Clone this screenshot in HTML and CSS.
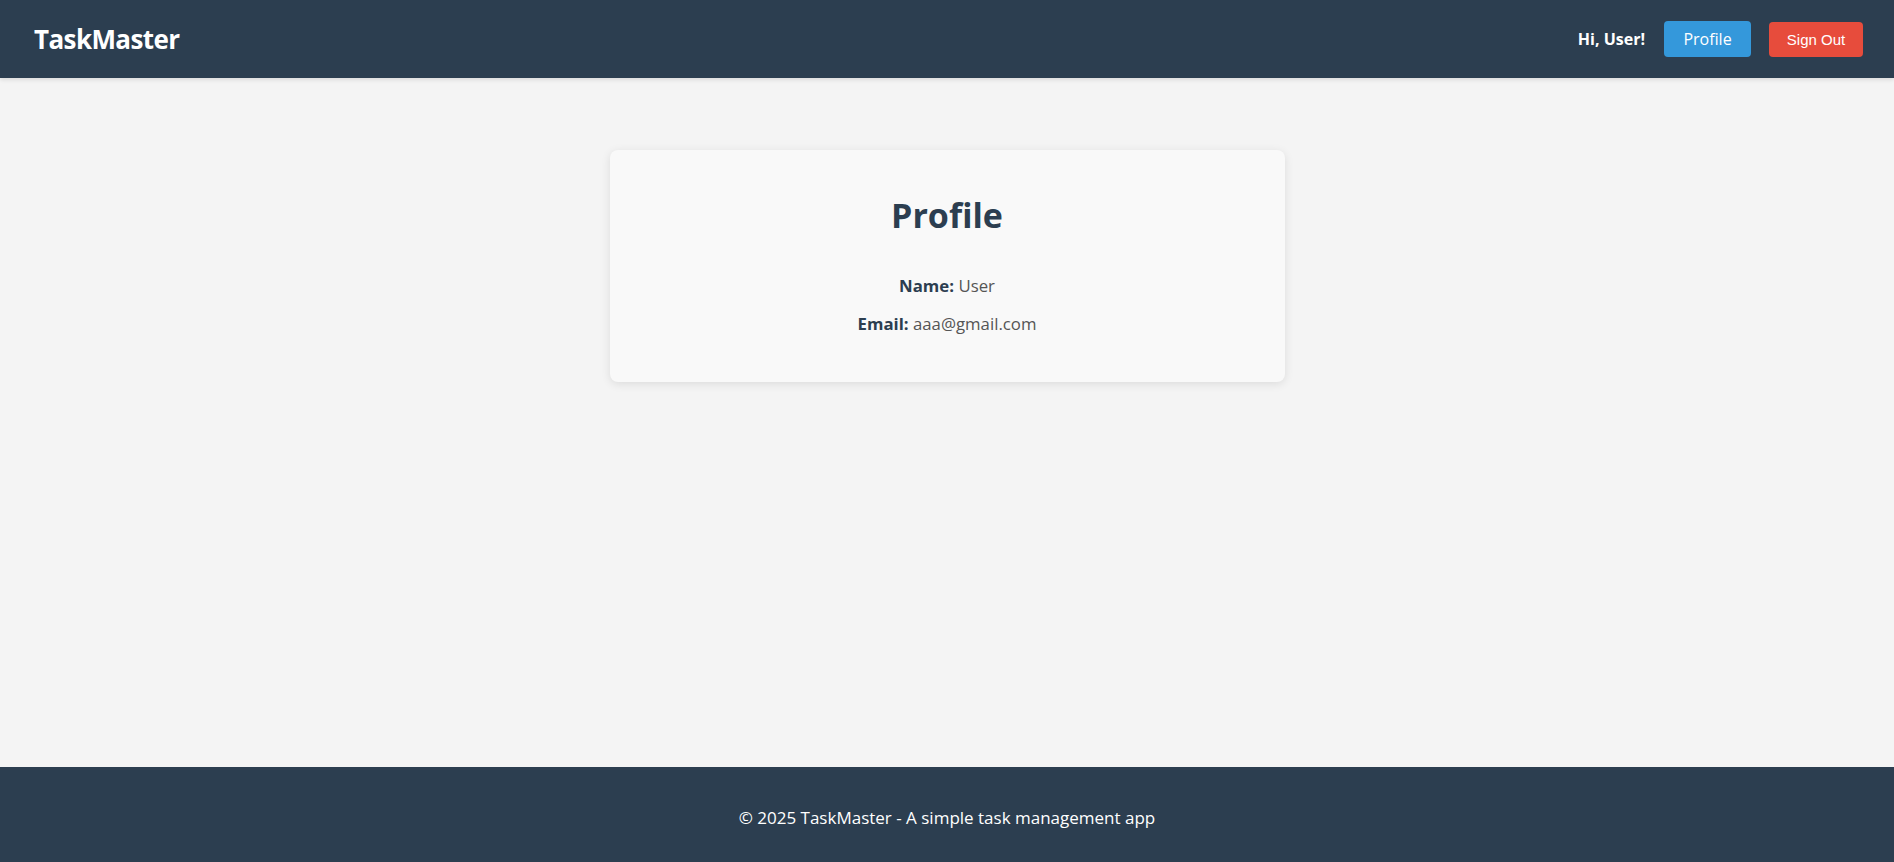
FILE: index.html
```html
<!DOCTYPE html>
<html lang="en">
<head>
<meta charset="utf-8">
<title>TaskMaster - Profile</title>
<link rel="stylesheet" href="styles.css">
</head>
<body>
<header class="topbar">
  <div class="logo">TaskMaster</div>
  <nav class="nav">
    <span class="greeting">Hi, User!</span>
    <a class="btn btn-profile" href="#">Profile</a>
    <button class="btn btn-signout" type="button">Sign Out</button>
  </nav>
</header>
<main class="main">
  <section class="card">
    <h2 class="card-title">Profile</h2>
    <p class="field"><strong>Name:</strong> User</p>
    <p class="field"><strong>Email:</strong> aaa@gmail.com</p>
  </section>
</main>
<footer class="footer">
  <p>© 2025 TaskMaster - A simple task management app</p>
</footer>
</body>
</html>
```
FILE: styles.css
```css
* { box-sizing: border-box; }
html, body { height: 100%; }
body {
  margin: 0;
  font-family: "Open Sans", "Noto Sans", sans-serif;
  background: #f4f4f4;
  color: #333;
  display: flex;
  flex-direction: column;
  min-height: 100vh;
}
.topbar {
  height: 78px;
  background: #2c3e50;
  color: #fff;
  display: flex;
  align-items: center;
  justify-content: space-between;
  padding: 0 31px 0 34px;
  box-shadow: 0 2px 4px rgba(0,0,0,0.1);
}
.logo {
  font-size: 26px;
  font-weight: 700;
  letter-spacing: -0.6px;
}
.nav {
  display: flex;
  align-items: center;
  gap: 18px;
}
.greeting {
  font-weight: 700;
  font-size: 16px;
  margin-right: 1px;
}
.btn {
  border: none;
  border-radius: 4px;
  color: #fff;
  text-decoration: none;
  display: inline-flex;
  align-items: center;
  justify-content: center;
  cursor: pointer;
}
.btn-profile {
  background: #3498db;
  height: 36px;
  width: 87px;
  font-size: 16px;
}
.btn-signout {
  background: #e74c3c;
  height: 35px;
  width: 94px;
  font-family: "Liberation Sans", Arial, sans-serif;
  font-size: 15px;
}
.main {
  flex: 1;
  display: flex;
  flex-direction: column;
  align-items: center;
  padding-top: 72px;
}
.card {
  width: 675px;
  height: 232px;
  background: #f9f9f9;
  border-radius: 8px;
  box-shadow: 0 2px 10px rgba(0,0,0,0.1);
  padding: 43px 32px 32px;
  text-align: center;
}
.card-title {
  margin: 0 0 37px;
  font-size: 34px;
  line-height: 44px;
  font-weight: 700;
  color: #2c3e50;
}
.field {
  margin: 0 0 14px;
  font-size: 16.8px;
  line-height: 24px;
  color: #555;
}
.field strong {
  color: #2c3e50;
}
.footer {
  background: #2c3e50;
  color: #fff;
  height: 95px;
  text-align: center;
  padding-top: 40px;
}
.footer p {
  margin: 0;
  font-size: 17px;
  line-height: 22px;
}
```
